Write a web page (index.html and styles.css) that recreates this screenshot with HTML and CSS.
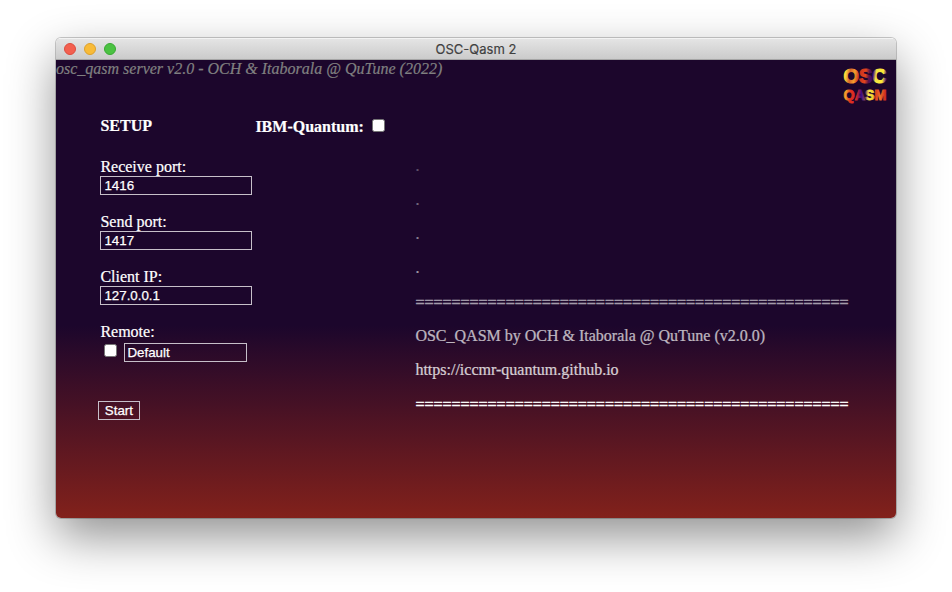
FILE: index.html
```html
<!DOCTYPE html>
<html lang="en">
<head>
<meta charset="utf-8">
<title>OSC-Qasm 2</title>
<link rel="stylesheet" href="styles.css">
</head>
<body>
<div class="window">
  <div class="titlebar">
    <div class="lights"><i class="light close"></i><i class="light minimize"></i><i class="light expand"></i></div>
    <span class="title">OSC-Qasm 2</span>
  </div>
  <main class="content">
    <header class="top">
      <em class="tagline">osc_qasm server v2.0 - OCH &amp; Itaborala @ QuTune (2022)</em>
      <svg class="logo" width="46" height="38" viewBox="0 0 46 38" aria-label="OSC QASM">
        <defs>
          <linearGradient id="osc" x1="0" y1="0" x2="45" y2="6" gradientUnits="userSpaceOnUse">
            <stop offset="0" stop-color="#ffe83a"/><stop offset=".1" stop-color="#ffd93a"/><stop offset=".2" stop-color="#d8642a"/>
            <stop offset=".3" stop-color="#f6a02c"/><stop offset=".4" stop-color="#c8321e"/>
            <stop offset=".54" stop-color="#e2441f"/><stop offset=".62" stop-color="#5a1248"/>
            <stop offset=".7" stop-color="#3b0a80"/><stop offset=".77" stop-color="#f0e545"/>
            <stop offset=".92" stop-color="#ffe936"/><stop offset="1" stop-color="#4a1078"/>
          </linearGradient>
          <linearGradient id="qasm" x1="0" y1="0" x2="45" y2="4" gradientUnits="userSpaceOnUse">
            <stop offset="0" stop-color="#c9361f"/><stop offset=".14" stop-color="#f3a32c"/>
            <stop offset=".24" stop-color="#e3301e"/><stop offset=".38" stop-color="#d42a28"/>
            <stop offset=".48" stop-color="#3d0a86"/><stop offset=".58" stop-color="#7a4a60"/>
            <stop offset=".64" stop-color="#fff04a"/><stop offset=".74" stop-color="#f2d22e"/>
            <stop offset=".8" stop-color="#df3a1e"/><stop offset=".9" stop-color="#f0762a"/>
            <stop offset="1" stop-color="#d3301e"/>
          </linearGradient>
        </defs>
        <text class="logo-osc" x="1.5" y="17" textLength="43" lengthAdjust="spacingAndGlyphs" fill="url(#osc)" stroke="url(#osc)">OSC</text>
        <text class="logo-qasm" x="1.5" y="34" textLength="43" lengthAdjust="spacingAndGlyphs" fill="url(#qasm)" stroke="url(#qasm)">QASM</text>
      </svg>
    </header>
    <div class="columns">
      <form class="setup">
        <b class="heading">SETUP</b>
        <label class="field">Receive port:<input class="box" type="text" value="1416"></label>
        <label class="field">Send port:<input class="box" type="text" value="1417"></label>
        <label class="field">Client IP:<input class="box" type="text" value="127.0.0.1"></label>
        <div class="remote-label">Remote:</div>
        <div class="remote"><i class="check"></i><input class="box short" type="text" value="Default"></div>
        <button class="start" type="button">Start</button>
      </form>
      <section class="right">
        <label class="ibm">IBM-Quantum:<i class="check"></i></label>
        <div class="log">
          <p class="o1">.</p>
          <p class="o2">.</p>
          <p class="o3">.</p>
          <p class="o4">.</p>
          <p class="rule o5">================================================</p>
          <p class="o6">OSC_QASM by OCH &amp; Itaborala @ QuTune (v2.0.0)</p>
          <p class="o7">https://iccmr-quantum.github.io</p>
          <p class="rule">================================================</p>
        </div>
      </section>
    </div>
  </main>
</div>
</body>
</html>
```
FILE: styles.css
```css
* { box-sizing: border-box; }
body { margin: 0; padding: 38px 56px; height: 592px; overflow: hidden; background: #fff; }
.window {
  width: 840px; height: 480px; border-radius: 5px; overflow: hidden;
  display: flex; flex-direction: column;
  box-shadow: 0 0 0 1px rgba(0,0,0,.2), 0 19px 48px rgba(0,0,0,.43);
}
.titlebar {
  height: 22px; display: grid; grid-template-columns: 1fr auto 1fr; align-items: center;
  padding: 0 8px; background: linear-gradient(#e4e4e4, #cbcbcb);
  border-top: 1px solid #f3f3f3; border-bottom: 1px solid #a5a5a5;
}
.lights { display: flex; gap: 8px; }
.light { width: 12px; height: 12px; border-radius: 50%; border: 1px solid; }
.close { background: #f3604f; border-color: #dc4c3e; }
.minimize { background: #f8bb38; border-color: #dca02c; }
.expand { background: #4bc242; border-color: #38a932; }
.title { font: 13px/20px Inter, sans-serif; color: #404040; -webkit-text-stroke: .15px #404040; }
.content {
  flex: 1; color: #fff; font: 16px/18px "Liberation Serif", serif;
  -webkit-text-stroke: .2px currentColor;
  background: linear-gradient(#1c062c 0%, #1c062c 58%, #82211b 100%);
}
.top { height: 57px; display: flex; justify-content: space-between; }
.tagline { color: #808080; white-space: nowrap; }
.logo { margin: 6px 8px 0 0; -webkit-text-stroke: 0; }
.logo-osc { font: bold 20px "Liberation Sans", sans-serif; stroke-width: 1.2px; }
.logo-qasm { font: bold 14.5px "Liberation Sans", sans-serif; stroke-width: .9px; }
.columns { display: flex; padding-left: 44.4px; }
.setup { width: 155px; margin: 0; display: flex; flex-direction: column; align-items: flex-start; }
.heading { margin-bottom: 23px; }
.field { display: flex; flex-direction: column; margin-bottom: 18px; }
.box {
  width: 151.5px; height: 19px; margin: 0; padding: 0 3px; border: 1px solid #c6bfc9; border-radius: 0;
  background: transparent; color: #fff; font: 13.33px "Liberation Sans", sans-serif;
  -webkit-text-stroke: .25px currentColor;
}
.remote { display: flex; gap: 7px; margin: 2px 0 0 4px; }
.short { width: 123px; padding: 0 2px; }
.check {
  width: 13px; height: 13px; margin-top: 1px; background: #fff;
  border: 1px solid #767676; border-radius: 2.5px;
}
.start {
  width: 42px; height: 19px; margin: 39px 0 0 -2.5px; padding: 0; border: 1px solid #c6bfc9; border-radius: 0;
  background: transparent; color: #fff; font: 13.33px "Liberation Sans", sans-serif;
  -webkit-text-stroke: .25px currentColor;
}
.ibm { display: flex; gap: 8px; font-weight: bold; padding-top: 1px; height: 40px; }
.log { padding-left: 160px; }
.log p { margin: 0 0 16px; white-space: nowrap; }
.log .rule { padding-top: 1px; margin-bottom: 15px; -webkit-text-stroke: .5px currentColor; }
.log .o1 { opacity: .3; }
.log .o2 { opacity: .4; }
.log .o3 { opacity: .5; }
.log .o4 { opacity: .6; }
.log .o5 { opacity: .6; }
.log .o6 { opacity: .7; }
.log .o7 { opacity: .8; }
```
